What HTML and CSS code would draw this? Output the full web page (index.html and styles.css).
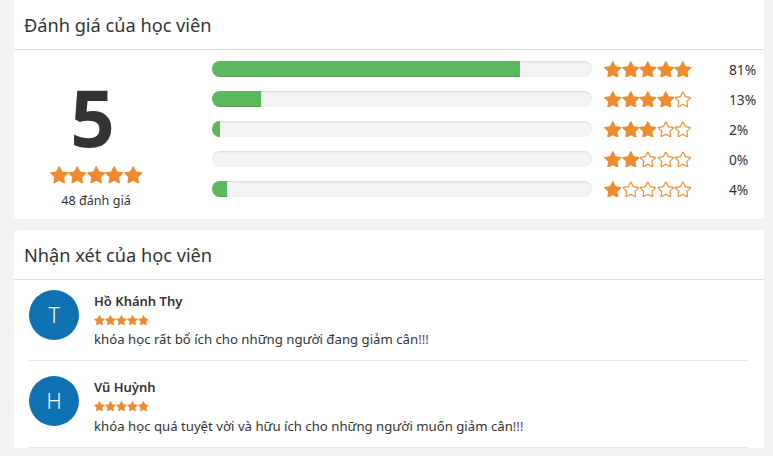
FILE: index.html
```html
<!DOCTYPE html>
<html lang="vi">
<head>
<meta charset="utf-8">
<title>Đánh giá</title>
<link rel="stylesheet" href="styles.css">
</head>
<body>
<svg class="defs" width="0" height="0" aria-hidden="true">
  <defs>
    <symbol id="sf" viewBox="64 32 1664 1590"><path fill="currentColor" d="M1728 647q0 22-26 48l-363 354 86 500q1 7 1 20 0 21-10.5 35.5t-30.5 14.5q-19 0-40-12l-449-236-449 236q-21 12-40 12-21 0-31.5-14.5t-10.5-35.5q0-6 2-20l86-500-364-354q-25-27-25-48 0-37 56-46l502-73 225-455q19-41 49-41t49 41l225 455 502 73q56 9 56 46z"/></symbol>
    <symbol id="so" viewBox="64 32 1664 1590"><path fill="none" stroke="currentColor" stroke-width="125" stroke-linejoin="round" transform="translate(896 826) scale(0.86) translate(-896 -826)" d="M1728 647q0 22-26 48l-363 354 86 500q1 7 1 20 0 21-10.5 35.5t-30.5 14.5q-19 0-40-12l-449-236-449 236q-21 12-40 12-21 0-31.5-14.5t-10.5-35.5q0-6 2-20l86-500-364-354q-25-27-25-48 0-37 56-46l502-73 225-455q19-41 49-41t49 41l225 455 502 73q56 9 56 46z"/></symbol>
  </defs>
</svg>

<section class="card">
  <h2 class="card-title">Đánh giá của học viên</h2>
  <div class="summary">
    <div class="score">
      <div class="score-num">5</div>
      <div class="stars stars-lg">
        <svg><use href="#sf"/></svg><svg><use href="#sf"/></svg><svg><use href="#sf"/></svg><svg><use href="#sf"/></svg><svg><use href="#sf"/></svg>
      </div>
      <div class="score-count">48 đánh giá</div>
    </div>
    <div class="rows">
      <div class="row">
        <div class="bar"><div class="fill" style="width:81%"></div></div>
        <div class="stars stars-md"><svg><use href="#sf"/></svg><svg><use href="#sf"/></svg><svg><use href="#sf"/></svg><svg><use href="#sf"/></svg><svg><use href="#sf"/></svg></div>
        <div class="pct">81%</div>
      </div>
      <div class="row">
        <div class="bar"><div class="fill" style="width:13%"></div></div>
        <div class="stars stars-md"><svg><use href="#sf"/></svg><svg><use href="#sf"/></svg><svg><use href="#sf"/></svg><svg><use href="#sf"/></svg><svg><use href="#so"/></svg></div>
        <div class="pct">13%</div>
      </div>
      <div class="row">
        <div class="bar"><div class="fill" style="width:2%"></div></div>
        <div class="stars stars-md"><svg><use href="#sf"/></svg><svg><use href="#sf"/></svg><svg><use href="#sf"/></svg><svg><use href="#so"/></svg><svg><use href="#so"/></svg></div>
        <div class="pct">2%</div>
      </div>
      <div class="row">
        <div class="bar"><div class="fill" style="width:0%"></div></div>
        <div class="stars stars-md"><svg><use href="#sf"/></svg><svg><use href="#sf"/></svg><svg><use href="#so"/></svg><svg><use href="#so"/></svg><svg><use href="#so"/></svg></div>
        <div class="pct">0%</div>
      </div>
      <div class="row">
        <div class="bar"><div class="fill" style="width:4%"></div></div>
        <div class="stars stars-md"><svg><use href="#sf"/></svg><svg><use href="#so"/></svg><svg><use href="#so"/></svg><svg><use href="#so"/></svg><svg><use href="#so"/></svg></div>
        <div class="pct">4%</div>
      </div>
    </div>
  </div>
</section>

<section class="card card-reviews">
  <h2 class="card-title">Nhận xét của học viên</h2>
  <ul class="reviews">
    <li class="review">
      <div class="avatar">T</div>
      <div class="review-body">
        <div class="name">Hồ Khánh Thy</div>
        <div class="stars stars-sm"><svg><use href="#sf"/></svg><svg><use href="#sf"/></svg><svg><use href="#sf"/></svg><svg><use href="#sf"/></svg><svg><use href="#sf"/></svg></div>
        <p class="comment">khóa học rất bổ ích cho những người đang giảm cân<span class="excl">!!!</span></p>
      </div>
    </li>
    <li class="review">
      <div class="avatar">H</div>
      <div class="review-body">
        <div class="name">Vũ Huỳnh</div>
        <div class="stars stars-sm"><svg><use href="#sf"/></svg><svg><use href="#sf"/></svg><svg><use href="#sf"/></svg><svg><use href="#sf"/></svg><svg><use href="#sf"/></svg></div>
        <p class="comment">khóa học quá tuyệt vời và hữu ích cho những người muốn giảm cân<span class="excl">!!!</span></p>
      </div>
    </li>
  </ul>
</section>
</body>
</html>
```
FILE: styles.css
```css
* { box-sizing: border-box; }
body {
  margin: 0;
  background: #f2f2f2;
  font-family: "Noto Sans", "Open Sans", sans-serif;
  color: #333;
  font-size: 13px;
}
.defs { position: absolute; width: 0; height: 0; overflow: hidden; }
.card {
  width: 750px;
  margin: 0 0 11px 14px;
  background: #fff;
  border-radius: 0 0 4px 4px;
}
.card-reviews { border-radius: 4px 4px 0 0; margin-bottom: 0; }
.card-title {
  margin: 0;
  height: 50px;
  padding: 0 10px;
  display: flex;
  align-items: center;
  font-size: 18.2px;
  font-weight: 400;
  color: #333;
  border-bottom: 1px solid #ddd;
}
.summary {
  display: flex;
  height: 169px;
}
.score {
  width: 164px;
  display: flex;
  flex-direction: column;
  align-items: center;
  padding-top: 22px;
}
.score-num {
  font-size: 78px;
  font-weight: 700;
  line-height: 90px;
  color: #333;
  padding-right: 7px;
}
.stars { display: flex; color: #ef8b2f; }
.stars svg { display: block; flex-shrink: 0; }
.stars-lg { margin-top: 4px; }
.stars-lg svg { width: 18.4px; height: 17.6px; }
.score-count { margin-top: 8px; line-height: 18px; font-size: 12.6px; }
.rows {
  padding: 11px 0 0 34px;
  display: flex;
  flex-direction: column;
  gap: 14px;
}
.row {
  display: flex;
  align-items: center;
  height: 16px;
}
.bar {
  width: 380px;
  height: 16px;
  border-radius: 8px;
  background: #f3f3f3;
  box-shadow: inset 0 1px 2px rgba(0,0,0,0.1);
  overflow: hidden;
}
.fill {
  height: 100%;
  background: #5cb85c;
  box-shadow: inset 0 -1px 0 rgba(0,0,0,0.15);
}
.stars-md { margin-left: 12px; }
.stars-md svg { width: 17.6px; height: 16.8px; }
.pct { margin-left: 37px; font-size: 13.8px; }
.reviews {
  list-style: none;
  margin: 0;
  padding: 0 15px;
}
.review {
  display: flex;
  gap: 15px;
  padding: 15px 0 12px;
  border-bottom: 1px solid #e8e8e8;
}
.review:first-child { padding-top: 10px; }
.avatar {
  width: 50px;
  height: 50px;
  border-radius: 50%;
  background: #0f72b3;
  color: #fff;
  display: flex;
  align-items: center;
  justify-content: center;
  font-size: 21px;
  font-weight: 300;
  flex-shrink: 0;
}
.review-body { padding-top: 1px; }
.name { font-weight: 600; font-size: 13px; line-height: 20px; color: #333; }
.stars-sm { margin-top: 4px; }
.stars-sm svg { width: 10.9px; height: 10.4px; }
.comment { margin: 5px 0 0; line-height: 18px; font-size: 13.2px; }
.excl { color: #6d3a7c; }
```
